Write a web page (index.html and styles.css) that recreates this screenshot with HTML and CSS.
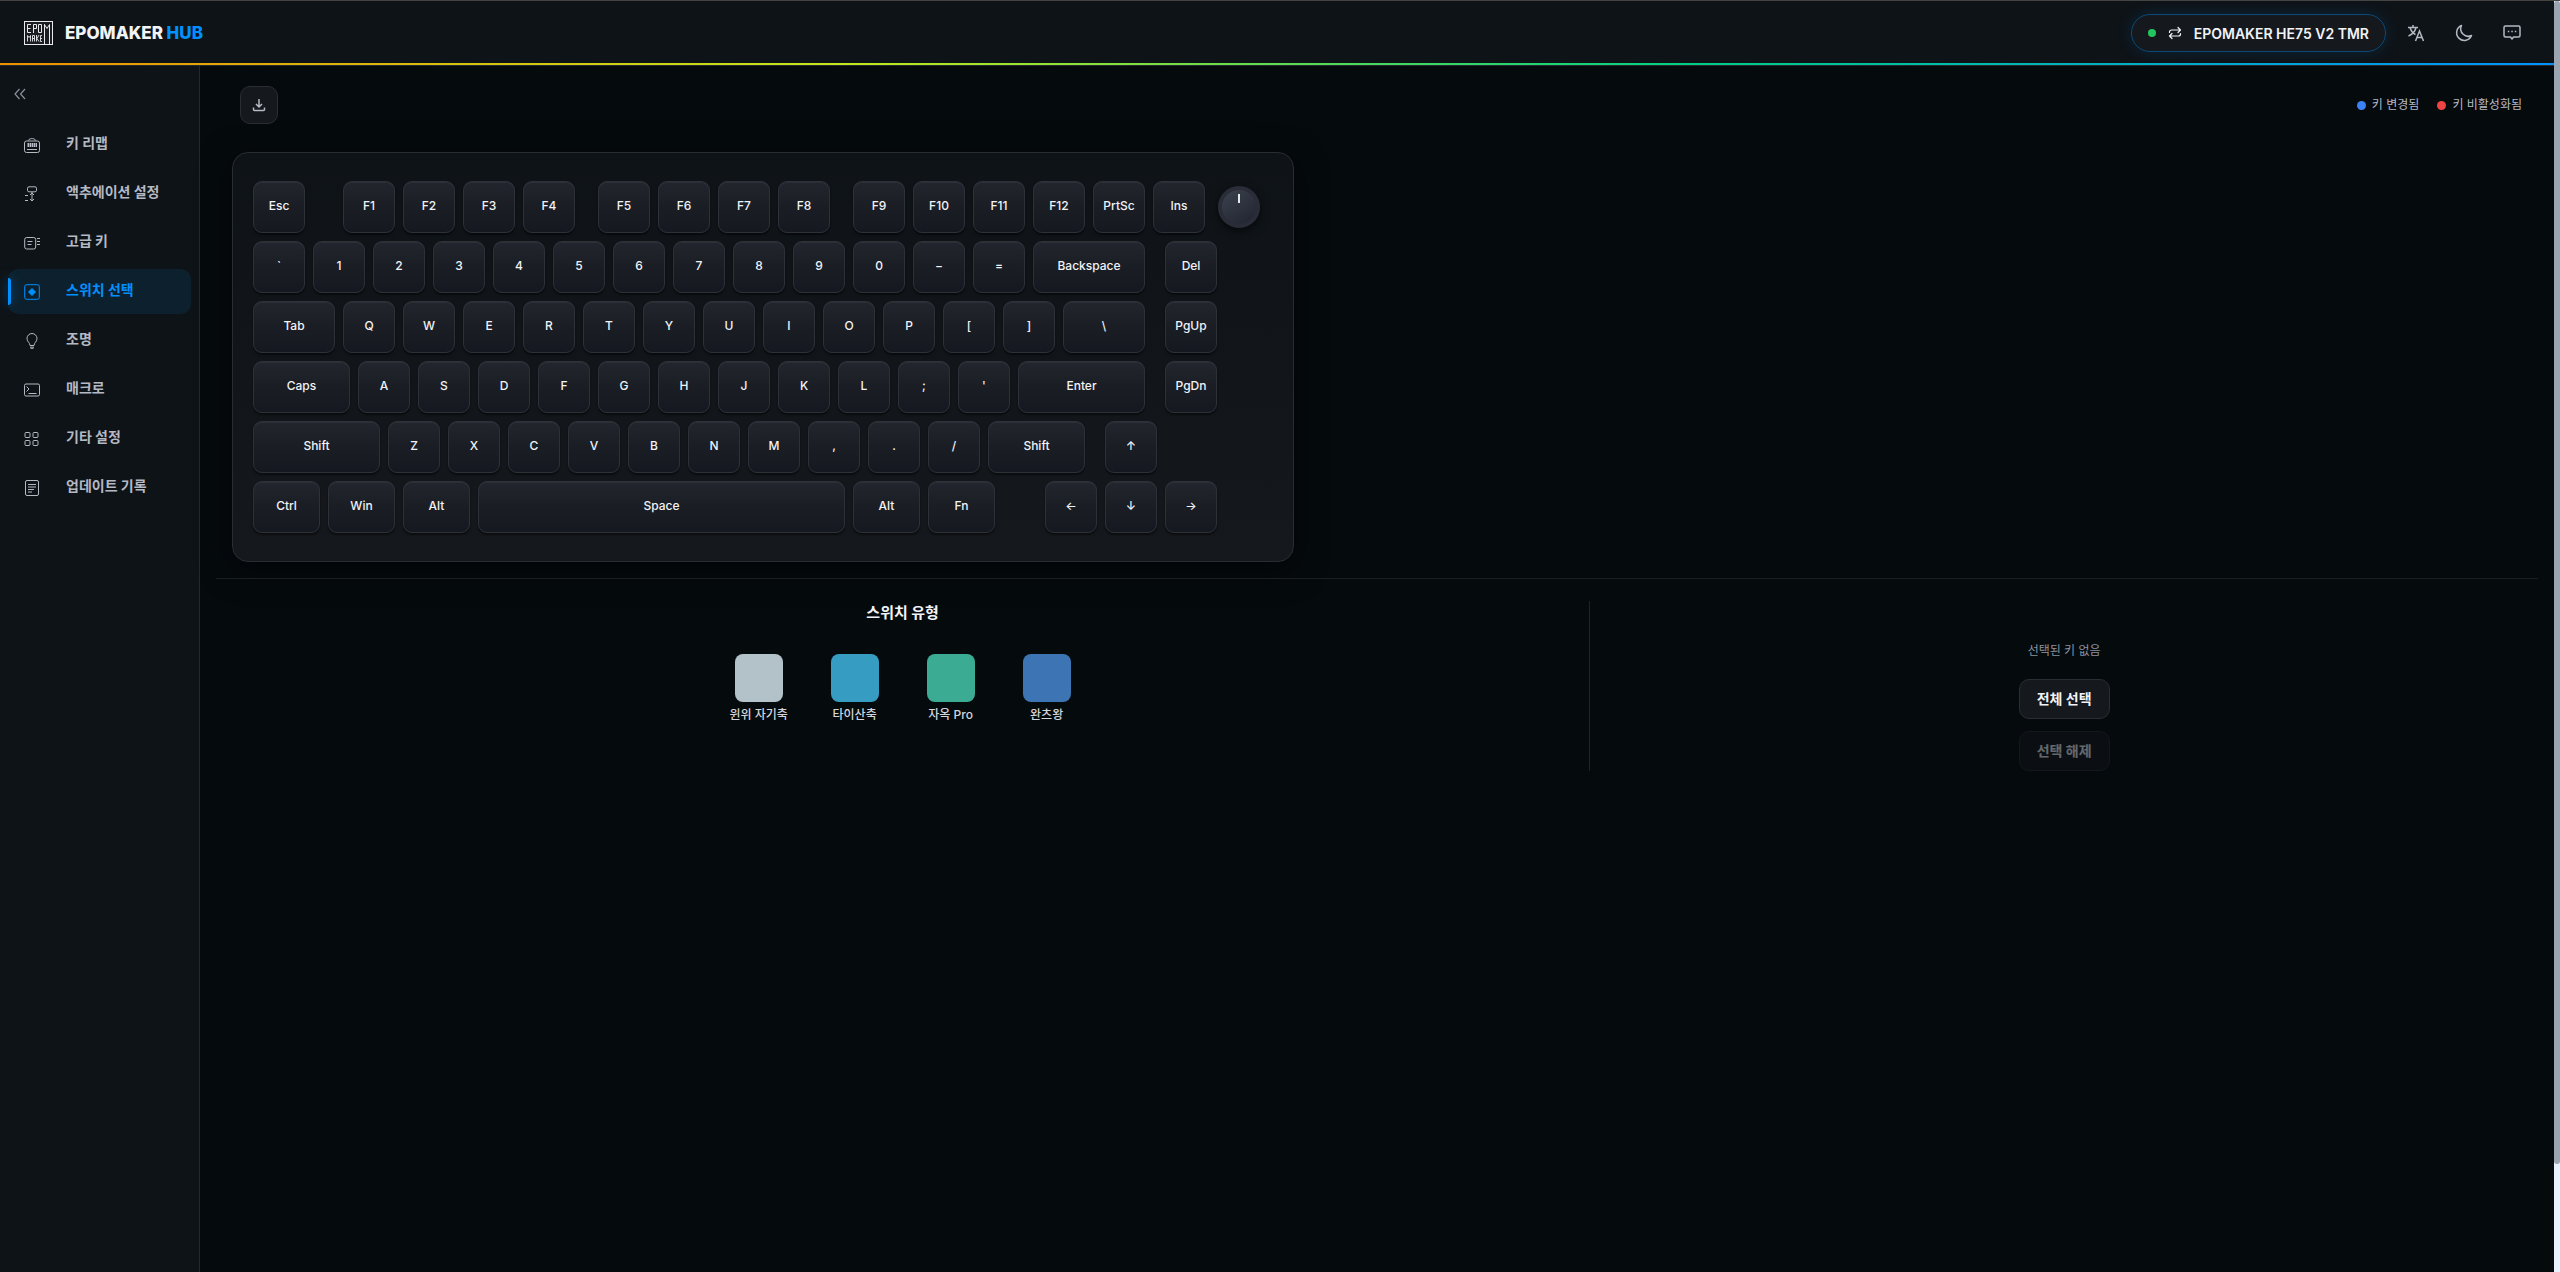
FILE: index.html
```html
<!DOCTYPE html>
<html lang="ko">
<head>
  <meta charset="UTF-8" />
  <meta name="viewport" content="width=device-width, initial-scale=1" />
  <title>EPOMAKER HUB</title>
  <link rel="stylesheet" href="styles.css">
</head>
<body>
  <div class="app">
    <header class="topbar">
      <a class="brand" href="#">
        <svg class="brand-logo" viewBox="0 0 29 24" fill="none" stroke="#e8eaee">
          <rect x="0.5" y="0.5" width="28" height="23" fill="#1b1d22"/>
          <path d="M7 3.5H3.5v8H7M3.5 7.5h3M9.5 12V3.5h3v4h-3M14.5 3.5h3v8h-3zM20.5 20V3.5l2.500 4 2.500-4V23M20.500 3.500V23"/>
          <path d="M3.500 20.500v-6l1.500 2 1.500-2v6M8.500 20.500v-6h2v6M8.500 17.500h2M12.500 14v6.500M15 14l-2 3.500 2 3M18 14.500h-1.500v6H18M16.500 17.500h1.500" stroke-width="0.900"/>
        </svg>
        <span>EPOMAKER <b>HUB</b></span>
      </a>
      <div class="topbar-actions">
        <button class="device" type="button">
          <span class="dot online"></span>
          <svg width="14" height="14" viewBox="0 0 14 14" fill="none" stroke="currentColor" stroke-width="1.200" stroke-linecap="round" stroke-linejoin="round">
            <path d="M1.500 6.500V6a2 2 0 0 1 2-2h9M10 1.500 12.500 4 10 6.500M12.500 7.500V8a2 2 0 0 1-2 2h-9M4 7.500 1.500 10 4 12.500"/>
          </svg>
          EPOMAKER HE75 V2 TMR
        </button>
        <button class="icon-btn" type="button" aria-label="언어">
          <svg width="18" height="18" viewBox="0 0 18 18" fill="none" stroke="currentColor" stroke-width="1.500">
            <path d="M1 3.500h10M6 1v2.500M9 3.500C8.200 7 5 10.500 1.500 12M3 3.500C4 7 6.500 9.500 8.500 10.500M8.500 17l4-10 4 10M9.800 13.500h5.400"/>
          </svg>
        </button>
        <button class="icon-btn" type="button" aria-label="다크 모드">
          <svg width="18" height="18" viewBox="0 0 18 18" fill="none" stroke="currentColor" stroke-width="1.500" stroke-linejoin="round">
            <path d="M6.500 1.500a7.700 7.700 0 1 0 10 10A7.500 7.500 0 0 1 6.500 1.500z"/>
          </svg>
        </button>
        <button class="icon-btn" type="button" aria-label="피드백">
          <svg width="18" height="18" viewBox="0 0 18 18" fill="none" stroke="currentColor" stroke-width="1.500" stroke-linejoin="round">
            <path d="M2.500 2h13a1.500 1.500 0 0 1 1.500 1.500v8a1.500 1.500 0 0 1-1.500 1.500h-5L9 15l-1.500-2h-5A1.500 1.500 0 0 1 1 11.500v-8A1.500 1.500 0 0 1 2.500 2z"/>
            <path d="M4.800 7.500h1.500M8.300 7.500h1.500M11.800 7.500h1.500"/>
          </svg>
        </button>
      </div>
    </header>

    <div class="body">
      <aside class="sidebar">
        <button class="collapse" type="button" aria-label="메뉴 접기">
          <svg width="12" height="12" viewBox="0 0 12 12" fill="none" stroke="currentColor" stroke-width="1.200">
            <path d="M5.500 1 1 6l4.500 5M11 1 6.500 6l4.500 5"/>
          </svg>
        </button>
        <nav>
          <a href="#">
            <svg viewBox="0 0 16 16"><path d="M4.500 3.500C5 1 7.500 2.500 8 1c.5 1.500 3 0 3.500 2.500"/><rect x="0.500" y="4" width="15" height="11.500" rx="2"/><path d="M3 7h10M3 9h10M4.500 6v4M6.500 6v4M8.500 6v4M10.500 6v4M12.500 6v4M3 12.500h10"/></svg>
            <span>키 리맵</span>
          </a>
          <a href="#">
            <svg viewBox="0 0 16 16"><rect x="3.500" y="0.800" width="9" height="5" rx="1.500"/><path d="M8 6v9M6 9l2-2 2 2M6 13l2 2 2-2M1 9.500h3M1 14.500h3"/></svg>
            <span>액추에이션 설정</span>
          </a>
          <a href="#">
            <svg viewBox="0 0 16 16"><rect x="0.700" y="2.500" width="11" height="11.500" rx="2"/><path d="M3.500 6.500h5M3.500 9.500h4M13 3.500h3M13 6.500h3M13 9.500h3"/></svg>
            <span>고급 키</span>
          </a>
          <a href="#" class="active">
            <svg viewBox="0 0 16 16"><rect x="0.700" y="0.700" width="14.600" height="14.600" rx="2"/><path d="M8 4.500 11.500 8 8 11.500 4.500 8z" fill="currentColor"/></svg>
            <span>스위치 선택</span>
          </a>
          <a href="#">
            <svg viewBox="0 0 16 16"><path d="M6 12.500c0-3-3-3.500-3-7a5 5 0 0 1 10 0c0 3.500-3 4-3 7zM6 14.200h4M6.500 15.700h3"/></svg>
            <span>조명</span>
          </a>
          <a href="#">
            <svg viewBox="0 0 16 16"><rect x="0.500" y="2" width="15" height="12" rx="1.500"/><path d="M2.500 4.500 5 7 2.500 9.500M4.500 11.500h8"/></svg>
            <span>매크로</span>
          </a>
          <a href="#">
            <svg viewBox="0 0 16 16"><rect x="1" y="1.500" width="5" height="5" rx="1"/><rect x="9" y="1.500" width="5" height="5" rx="1"/><rect x="1" y="9.500" width="5" height="5" rx="1"/><rect x="9" y="9.500" width="5" height="5" rx="1"/></svg>
            <span>기타 설정</span>
          </a>
          <a href="#">
            <svg viewBox="0 0 16 16"><rect x="1.500" y="0.500" width="13" height="15" rx="1.500"/><path d="M4 4.500h8M4 7h8M4 9.500h6M4 12h4"/></svg>
            <span>업데이트 기록</span>
          </a>
        </nav>
      </aside>

      <main>
        <div class="toolbar">
          <button class="tool-btn" type="button" aria-label="내보내기">
            <svg width="14" height="14" viewBox="0 0 14 14" fill="none" stroke="currentColor" stroke-width="1.500">
              <path d="M7 1v8M4 6l3 3 3-3M1.500 9.500v2a1 1 0 0 0 1 1h9a1 1 0 0 0 1-1v-2"/>
            </svg>
          </button>
          <ul class="legend">
            <li><i class="dot changed"></i><span>키 변경됨</span></li>
            <li><i class="dot disabled"></i><span>키 비활성화됨</span></li>
          </ul>
        </div>

        <section class="keyboard">
          <div class="row">
            <button class="key">Esc</button>
            <button class="key gap-30">F1</button>
            <button class="key">F2</button>
            <button class="key">F3</button>
            <button class="key">F4</button>
            <button class="key gap-15">F5</button>
            <button class="key">F6</button>
            <button class="key">F7</button>
            <button class="key">F8</button>
            <button class="key gap-15">F9</button>
            <button class="key">F10</button>
            <button class="key">F11</button>
            <button class="key">F12</button>
            <button class="key">PrtSc</button>
            <button class="key">Ins</button>
            <button class="knob" aria-label="노브"></button>
          </div>
          <div class="row">
            <button class="key">`</button>
            <button class="key">1</button>
            <button class="key">2</button>
            <button class="key">3</button>
            <button class="key">4</button>
            <button class="key">5</button>
            <button class="key">6</button>
            <button class="key">7</button>
            <button class="key">8</button>
            <button class="key">9</button>
            <button class="key">0</button>
            <button class="key">−</button>
            <button class="key">=</button>
            <button class="key u200">Backspace</button>
            <button class="key gap-12">Del</button>
          </div>
          <div class="row">
            <button class="key u150">Tab</button>
            <button class="key">Q</button>
            <button class="key">W</button>
            <button class="key">E</button>
            <button class="key">R</button>
            <button class="key">T</button>
            <button class="key">Y</button>
            <button class="key">U</button>
            <button class="key">I</button>
            <button class="key">O</button>
            <button class="key">P</button>
            <button class="key">[</button>
            <button class="key">]</button>
            <button class="key u150">\</button>
            <button class="key gap-12">PgUp</button>
          </div>
          <div class="row">
            <button class="key u175">Caps</button>
            <button class="key">A</button>
            <button class="key">S</button>
            <button class="key">D</button>
            <button class="key">F</button>
            <button class="key">G</button>
            <button class="key">H</button>
            <button class="key">J</button>
            <button class="key">K</button>
            <button class="key">L</button>
            <button class="key">;</button>
            <button class="key">'</button>
            <button class="key u225">Enter</button>
            <button class="key gap-12">PgDn</button>
          </div>
          <div class="row">
            <button class="key u225">Shift</button>
            <button class="key">Z</button>
            <button class="key">X</button>
            <button class="key">C</button>
            <button class="key">V</button>
            <button class="key">B</button>
            <button class="key">N</button>
            <button class="key">M</button>
            <button class="key">,</button>
            <button class="key">.</button>
            <button class="key">/</button>
            <button class="key u175">Shift</button>
            <button class="key gap-12">↑</button>
          </div>
          <div class="row">
            <button class="key u125">Ctrl</button>
            <button class="key u125">Win</button>
            <button class="key u125">Alt</button>
            <button class="key u625">Space</button>
            <button class="key u125">Alt</button>
            <button class="key u125">Fn</button>
            <button class="key gap-42">←</button>
            <button class="key">↓</button>
            <button class="key">→</button>
          </div>
        </section>

        <section class="panel">
          <div class="switches">
            <h2>스위치 유형</h2>
            <div class="switch-list">
              <button class="switch" type="button"><span class="swatch silver"></span>윈위 자기축</button>
              <button class="switch" type="button"><span class="swatch cyan"></span>타이산축</button>
              <button class="switch" type="button"><span class="swatch green"></span>자옥 Pro</button>
              <button class="switch" type="button"><span class="swatch blue"></span>완츠왕</button>
            </div>
          </div>
          <div class="selection">
            <p>선택된 키 없음</p>
            <button class="btn" type="button">전체 선택</button>
            <button class="btn" type="button" disabled>선택 해제</button>
          </div>
        </section>
      </main>
    </div>
  </div>
  <div class="scroll-track"><div class="scroll-thumb"></div></div>
</body>
</html>
```
FILE: styles.css
```css
* {
  box-sizing: border-box;
}

body {
  margin: 0;
  display: flex;
  min-height: 100vh;
  border-top: 1px solid #444542;
  background-color: #050a0d;
  color: #f1f3f7;
  font-family: Inter, "Noto Sans CJK KR", sans-serif;
  font-size: 14px;
}

button {
  font: inherit;
  color: inherit;
  border: none;
  background: none;
  padding: 0;
  cursor: pointer;
}

.app {
  flex: 1;
  display: flex;
  flex-direction: column;
}

/* top bar */
.topbar {
  height: 65px;
  display: flex;
  align-items: center;
  justify-content: space-between;
  padding: 0 24px;
  border-bottom: 1px solid #25292e;
  background: #0e1317 linear-gradient(90deg, #ee9100, #c3e81b 33%, #00d084 66%, #0091ff) bottom / 100% 2px no-repeat;
}

.brand {
  display: flex;
  align-items: center;
  gap: 12px;
  color: #f1f3f7;
  text-decoration: none;
  font-size: 17px;
  font-weight: 800;
}

.brand b {
  color: #0091ff;
  font-weight: 800;
}

.brand-logo {
  width: 29px;
  height: 24px;
}

.topbar-actions {
  display: flex;
  align-items: center;
  gap: 12px;
}

.device {
  display: flex;
  align-items: center;
  gap: 12px;
  height: 38px;
  padding: 0 16px;
  border: 1px solid #0b4a78;
  border-radius: 19px;
  background-color: #15181d;
  box-shadow: 0 0 16px rgba(0, 145, 255, 0.15);
  font-weight: 600;
}

.dot {
  width: 9px;
  height: 9px;
  border-radius: 50%;
}

.online {
  width: 8px;
  height: 8px;
  background-color: #22c55e;
}

.changed {
  background-color: #3b82f6;
}

.disabled {
  background-color: #ef4444;
}

.icon-btn {
  display: flex;
  align-items: center;
  justify-content: center;
  width: 36px;
  height: 36px;
  color: #b4b9c4;
}

/* sidebar */
.body {
  flex: 1;
  display: flex;
}

.sidebar {
  width: 200px;
  background-color: #0e1317;
  border-right: 1px solid #25292e;
}

.collapse {
  display: block;
  margin: 22px 0 0 14px;
  height: 12px;
  color: #8b909a;
}

.collapse svg {
  display: block;
}

.sidebar nav {
  display: flex;
  flex-direction: column;
  gap: 4px;
  padding: 22px 8px 0;
}

.sidebar nav a {
  position: relative;
  display: flex;
  align-items: center;
  gap: 26px;
  height: 45px;
  padding-left: 16px;
  border-radius: 10px;
  color: #b4b9c4;
  text-decoration: none;
  font-weight: 700;
}

.sidebar nav span {
  padding-bottom: 6px;
}

.sidebar nav svg {
  width: 16px;
  height: 16px;
  fill: none;
  stroke: currentColor;
  stroke-width: 1;
}

.sidebar nav .active {
  color: #0091ff;
  background-color: #0d202d;
}

.sidebar nav .active::before {
  content: "";
  position: absolute;
  left: 0;
  top: 9px;
  bottom: 9px;
  width: 3px;
  border-radius: 0 3px 3px 0;
  background-color: #0091ff;
  box-shadow: 0 0 12px rgba(0, 145, 255, 0.6);
}

/* main */
main {
  flex: 1;
  padding: 20px 16px;
}

.toolbar {
  display: flex;
  align-items: center;
  justify-content: space-between;
  padding: 0 16px 0 24px;
}

.tool-btn {
  display: flex;
  align-items: center;
  justify-content: center;
  width: 38px;
  height: 38px;
  border: 1px solid #2a2d33;
  border-radius: 10px;
  background-color: #15181d;
  color: #b4b9c4;
}

.legend {
  display: flex;
  gap: 18px;
  margin: 0;
  padding: 0;
  list-style: none;
  color: #b4b9c4;
  font-family: "Noto Sans CJK KR", sans-serif;
  font-size: 12px;
}

.legend li {
  display: flex;
  align-items: center;
  gap: 6px;
}

.legend span {
  padding-bottom: 4px;
}

/* keyboard */
.keyboard {
  display: flex;
  flex-direction: column;
  gap: 8px;
  width: fit-content;
  margin: 28px 0 16px 16px;
  padding: 28px 28px 28px 20px;
  border: 1px solid #292d31;
  border-radius: 16px;
  background: linear-gradient(180deg, #0e1317, #15181c);
  box-shadow: 0 8px 32px rgba(0, 0, 0, 0.5);
}

.row {
  display: flex;
  gap: 8px;
}

.key {
  width: 52px;
  height: 52px;
  padding-bottom: 3px;
  border: 1px solid #2e3138;
  border-radius: 9px;
  background: linear-gradient(180deg, #22252d, #1a1e24 50%, #151820);
  box-shadow: 0 2px 2px rgba(0, 0, 0, 0.5), inset 0 1px 0 rgba(255, 255, 255, 0.05);
  font-size: 12px;
  font-weight: 500;
}

.u125 { width: 67px; }
.u150 { width: 82px; }
.u175 { width: 97px; }
.u200 { width: 112px; }
.u225 { width: 127px; }
.u625 { width: 367px; }

.gap-12 { margin-left: 12px; }
.gap-15 { margin-left: 15px; }
.gap-30 { margin-left: 30px; }
.gap-42 { margin-left: 42px; }

.knob {
  position: relative;
  width: 42px;
  height: 42px;
  margin: 5px;
  border: 4px solid #2a2d38;
  border-radius: 50%;
  background: linear-gradient(145deg, #3d424f, #1f2330);
  box-shadow: 0 3px 8px rgba(0, 0, 0, 0.6);
}

.knob::after {
  content: "";
  position: absolute;
  left: 16px;
  top: 4px;
  width: 2px;
  height: 9px;
  background-color: #e6e8ec;
}

/* bottom panel */
.panel {
  display: grid;
  grid-template-columns: 1.45fr 1fr;
  padding-top: 22px;
  border-top: 1px solid #1b1f23;
}

.switches {
  display: flex;
  flex-direction: column;
  align-items: center;
  border-right: 1px solid #1f2327;
}

h2 {
  margin: 0 0 30px;
  font-size: 15px;
  line-height: 23px;
  font-weight: 700;
}

.switch-list {
  display: flex;
}

.switch {
  display: flex;
  flex-direction: column;
  align-items: center;
  gap: 4px;
  width: 96px;
  color: #d3d6dc;
  font-size: 12px;
  line-height: 18px;
  font-weight: 500;
}

.swatch {
  width: 48px;
  height: 48px;
  border-radius: 8px;
}

.silver { background-color: #b3c2c9; }
.cyan { background-color: #369cc2; }
.green { background-color: #3cab93; }
.blue { background-color: #3d74b3; }

.selection {
  display: flex;
  flex-direction: column;
  align-items: center;
  gap: 12px;
  padding-top: 40px;
}

.selection p {
  margin: 0 0 8px;
  color: #8b93a1;
  font-family: "Noto Sans CJK KR", sans-serif;
  font-size: 12px;
  line-height: 18px;
}

.btn {
  height: 40px;
  padding: 0 17px 3px;
  border: 1px solid #2a2d33;
  border-radius: 10px;
  background-color: #15181d;
  font-weight: 700;
}

.btn:disabled {
  opacity: 0.4;
  cursor: default;
}

/* scrollbar */
.scroll-track {
  width: 6px;
  background-color: #e6f2ff;
}

.scroll-thumb {
  height: 1163px;
  max-height: 92vh;
  border-radius: 3px;
  background-color: #9aa5b1;
}
```
